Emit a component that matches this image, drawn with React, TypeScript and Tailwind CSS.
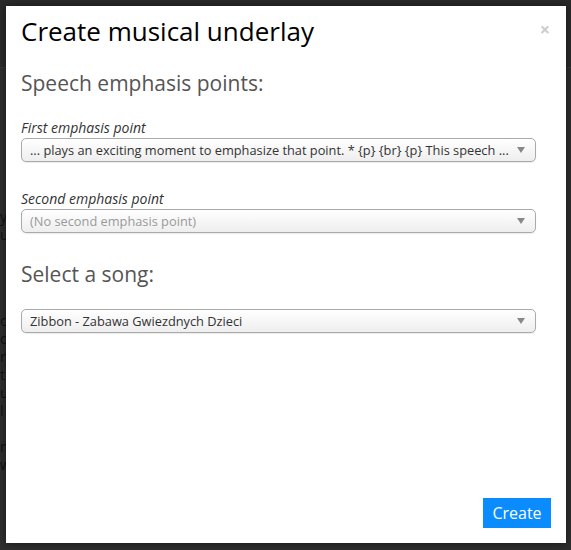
import React from "react";

function Caret() {
  return (
    <svg width="8" height="6" viewBox="0 0 8 6" className="shrink-0">
      <path d="M0 0 L8 0 L4 6 Z" fill="#888" />
    </svg>
  );
}

function SelectBox({ text, muted }: { text: string; muted?: boolean }) {
  return (
    <div className="flex h-[24px] items-center justify-between gap-1 rounded-[5px] border border-[#aaaaaa] bg-gradient-to-b from-white to-[#eeeeee] pl-[8px] pr-[10px] shadow-[0_1px_1px_rgba(0,0,0,0.08)]">
      <span
        className={`whitespace-nowrap text-[12.8px] leading-[18px] ${muted ? "text-[#999]" : "text-[#333]"}`}
      >
        {text}
      </span>
      <Caret />
    </div>
  );
}

export default function App() {
  return (
    <div
      className="relative h-[550px] w-[571px] overflow-hidden bg-[#2e2e2e]"
      style={{ fontFamily: '"Open Sans", "Noto Sans", sans-serif' }}
    >
      {/* dimmed page behind the modal */}
      <div className="h-[68px] border-b border-[#383838] bg-[#2a2a2a]" />
      <div className="flex flex-col items-start pt-[140px] text-[14px] text-[#111]">
        <span className="h-[18px] leading-[18px]">y</span>
        <span className="h-[18px] leading-[18px]">u</span>
        <span className="h-[68px]"></span>
        <span className="h-[18px] leading-[18px]">c</span>
        <span className="h-[18px] leading-[18px]">o</span>
        <span className="h-[18px] leading-[18px]">n</span>
        <span className="h-[18px] leading-[18px]">t</span>
        <span className="h-[18px] leading-[18px]">u</span>
        <span className="h-[18px] leading-[18px]">l</span>
        <span className="h-[18px]"></span>
        <span className="h-[18px] leading-[18px]">n</span>
        <span className="h-[18px] leading-[18px]">w</span>
      </div>

      {/* modal */}
      <div className="absolute left-[6px] top-[6px] flex h-[537px] w-[560px] flex-col bg-white px-[15px] shadow-[0_0_8px_rgba(0,0,0,0.5)]">
        <div className="flex items-start justify-between pt-[10px]">
          <h1 className="text-[26px] leading-[30px] text-black">Create musical underlay</h1>
          <span className="mr-[1px] mt-[4px] text-[18px] font-bold leading-none text-[#cccccc]">×</span>
        </div>

        <h2 className="mt-[24px] text-[21px] leading-[26px] text-[#555]">Speech emphasis points:</h2>

        <label className="mt-[23px] text-[14px] italic leading-[18px] text-[#333]">
          First emphasis point
        </label>
        <div className="mt-[1px] w-[515px]">
          <SelectBox text="... plays an exciting moment to emphasize that point. * {p} {br} {p} This speech ..." />
        </div>

        <label className="mt-[28px] text-[14px] italic leading-[18px] text-[#333]">
          Second emphasis point
        </label>
        <div className="mt-[1px] w-[515px]">
          <SelectBox text="(No second emphasis point)" muted />
        </div>

        <h2 className="mt-[28px] text-[21px] leading-[26px] text-[#555]">Select a song:</h2>

        <div className="mt-[22px] w-[515px]">
          <SelectBox text="Zibbon - Zabawa Gwiezdnych Dzieci" />
        </div>

        <div className="mt-auto flex justify-end pb-[15px] pr-0">
          <button className="h-[30px] w-[68px] bg-[#0a8cff] text-[16px] leading-none text-white">
            Create
          </button>
        </div>
      </div>
    </div>
  );
}
